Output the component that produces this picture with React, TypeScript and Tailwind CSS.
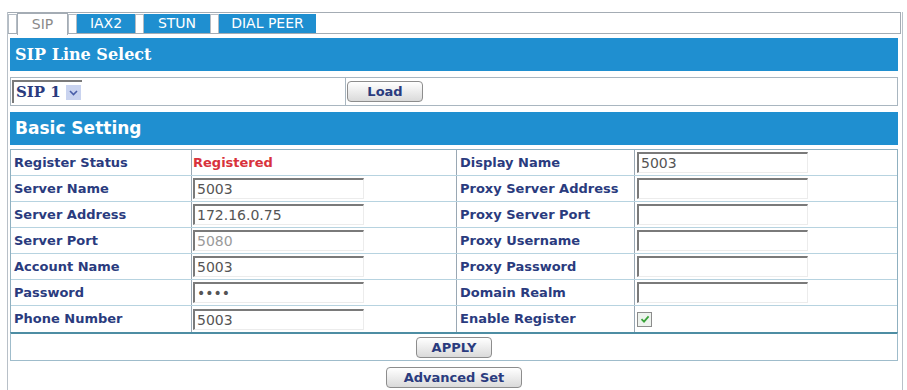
import React from 'react';

const labelCls = "font-['DejaVu_Sans',sans-serif] text-[13px] font-bold text-[#2a3b7e] pl-[3px] flex items-center";

interface Row {
  l1: string;
  v1: React.ReactNode;
  l2: string;
  v2: React.ReactNode;
}

function TextBox({ value, muted }: { value?: string; muted?: boolean }) {
  return (
    <div
      className={`h-[21px] w-[171px] border-t-2 border-l-2 border-t-[#7a7a7a] border-l-[#7a7a7a] border-b border-r border-b-[#ececec] border-r-[#ececec] bg-white px-[2px] text-[14px] leading-[18px] font-['DejaVu_Sans',sans-serif] ${
        muted ? 'text-[#9a9a9a]' : 'text-[#555]'
      }`}
    >
      {value}
    </div>
  );
}

function Checkbox() {
  return (
    <span className="flex h-[15px] w-[15px] items-center justify-center border border-[#8c8c8c] bg-[#eef3ee]">
      <svg width="10" height="10" viewBox="0 0 10 10">
        <path d="M1.5 5.2 L4 7.6 L8.6 2.4" fill="none" stroke="#3aa33a" strokeWidth="1.8" />
      </svg>
    </span>
  );
}

function Button({ children, width }: { children: React.ReactNode; width: string }) {
  return (
    <button
      className={`${width} h-[21px] rounded-[4px] border border-[#8d8d8d] bg-linear-to-b from-white to-[#dadada] text-[13px] font-bold text-[#2a3b7e] font-['DejaVu_Sans',sans-serif] leading-none`}
    >
      {children}
    </button>
  );
}

function Cap() {
  return <div className="mt-[1px] w-[9px] border-x border-t border-[#b4bcc4] bg-white" />;
}

export default function App() {
  const rows: Row[] = [
    {
      l1: 'Register Status',
      v1: <span className="text-[13px] font-bold text-[#d8323c]">Registered</span>,
      l2: 'Display Name',
      v2: <TextBox value="5003" />,
    },
    { l1: 'Server Name', v1: <TextBox value="5003" />, l2: 'Proxy Server Address', v2: <TextBox /> },
    { l1: 'Server Address', v1: <TextBox value="172.16.0.75" />, l2: 'Proxy Server Port', v2: <TextBox /> },
    { l1: 'Server Port', v1: <TextBox value="5080" muted />, l2: 'Proxy Username', v2: <TextBox /> },
    { l1: 'Account Name', v1: <TextBox value="5003" />, l2: 'Proxy Password', v2: <TextBox /> },
    { l1: 'Password', v1: <TextBox value="••••" />, l2: 'Domain Realm', v2: <TextBox /> },
    { l1: 'Phone Number', v1: <TextBox value="5003" />, l2: 'Enable Register', v2: <Checkbox /> },
  ];

  return (
    <div className="h-[390px] overflow-hidden bg-white pt-[12px] font-['DejaVu_Sans',sans-serif]">
      <div className="ml-[7px] h-[400px] w-[896px] border-x border-[#b8c0c8]">
        {/* Tabs */}
        <div className="flex h-[22px] w-[893px] border-y border-r border-[#a4acb4] text-[14px]">
          <Cap />
          <div className="relative z-10 -mb-[2px] flex w-[51px] items-center justify-center border-x border-t border-[#a4acb4] bg-white text-[#8a8a8a]">
            SIP
          </div>
          <Cap />
          <div className="mt-[1px] flex w-[58px] items-center justify-center bg-[#1f8fd0] text-white">IAX2</div>
          <Cap />
          <div className="mt-[1px] flex w-[66px] items-center justify-center bg-[#1f8fd0] text-white">STUN</div>
          <Cap />
          <div className="mt-[1px] flex w-[97px] items-center justify-center bg-[#1f8fd0] text-white">DIAL PEER</div>
        </div>

        <div className="ml-[2px] w-[888px]">
          {/* SIP Line Select */}
          <div className="mt-[4px] flex h-[33px] items-center bg-[#1f8fd0] pl-[5px] font-['DejaVu_Serif',serif] text-[16px] font-bold text-white">
            SIP Line Select
          </div>
          <div className="mt-[6px] flex h-[29px] border border-[#a9b6c0]">
            <div className="flex w-[335px] items-center border-r border-[#a9b6c0] pl-[1px]">
              <div className="flex h-[23px] w-[70px] items-center justify-between border-t-2 border-l-2 border-[#7a7a7a] bg-white pl-[2px] pr-[1px]">
                <span className="font-['DejaVu_Serif',serif] text-[15px] font-bold text-[#2a3b7e]">SIP 1</span>
                <span className="flex h-[15px] w-[15px] items-center justify-center bg-[#c9d3ef]">
                  <svg width="9" height="6" viewBox="0 0 9 6">
                    <path d="M1 1 L4.5 4.5 L8 1" fill="none" stroke="#4a5ea8" strokeWidth="1.6" />
                  </svg>
                </span>
              </div>
            </div>
            <div className="flex items-center pl-[1px]">
              <Button width="w-[76px]">Load</Button>
            </div>
          </div>

          {/* Basic Setting */}
          <div className="mt-[6px] flex h-[33px] items-center bg-[#1f8fd0] pl-[5px] text-[17px] font-bold text-white">
            Basic Setting
          </div>
          <div className="mt-[4px] border-x border-t border-[#8fb0c0]">
            {rows.map((r) => (
              <div key={r.l1} className="grid h-[26px] grid-cols-[180px_265px_178px_1fr] border-b border-[#b7d3e0] last:border-b-0">
                <div className={labelCls}>{r.l1}</div>
                <div className="flex items-center border-l border-[#9aa8b4] pl-[1px]">{r.v1}</div>
                <div className={`${labelCls} border-l border-[#9aa8b4]`}>{r.l2}</div>
                <div className="flex items-center border-l border-[#9aa8b4] pl-[2px]">{r.v2}</div>
              </div>
            ))}
          </div>
          <div className="flex h-[29px] items-center justify-center border-x border-b border-t-2 border-[#9fbccb] border-t-[#4d8da3]">
            <Button width="w-[76px]">APPLY</Button>
          </div>
          <div className="mt-[6px] flex justify-center">
            <Button width="w-[136px]">Advanced Set</Button>
          </div>
        </div>
      </div>
    </div>
  );
}
